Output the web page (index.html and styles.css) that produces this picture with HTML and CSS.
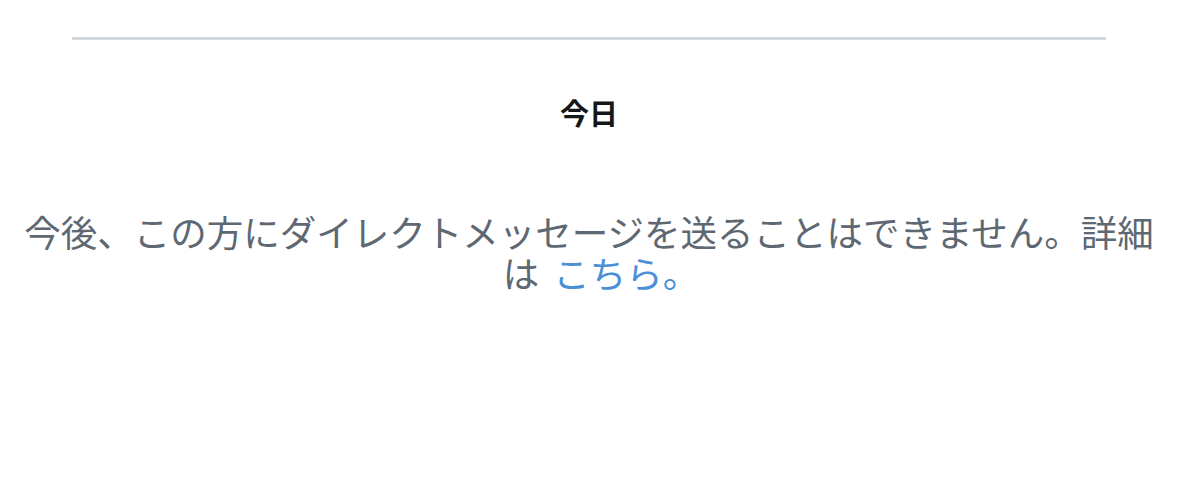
FILE: index.html
```html
<!DOCTYPE html>
<html lang="ja">
<head>
    <meta charset="UTF-8">
    <meta name="viewport" content="width=device-width, initial-scale=1.0">
    <title>メッセージ</title>
    <link rel="stylesheet" href="styles.css">
</head>
<body>

<div class="thread">
    <div class="divider"></div>
    <div class="day">今日</div>
    <p class="notice">今後、この方にダイレクトメッセージを送ることはできません。詳細<span class="tail">は</span> <a href="#" class="more-link">こちら。</a></p>
</div>

</body>
</html>
```

FILE: styles.css
```css
body, html {
    margin: 0;
    background: #fff;
    font-family: "Noto Sans CJK JP", "Noto Sans", sans-serif;
}
.thread {
    padding-top: 37px;
}
.divider {
    height: 3px;
    margin: 0 72px;
    background-color: #d2d9dc;
}
.day {
    margin-top: 58px;
    text-align: center;
    font-size: 29px;
    line-height: 29px;
    font-weight: bold;
    color: #14171a;
}
.notice {
    margin: 84px 0 0;
    padding: 0 8px;
    text-align: center;
    font-size: 36.5px;
    line-height: 41px;
    color: #5d6873;
}
.tail {
    display: inline-block;
    margin-left: 24px;
}
.more-link {
    display: inline-block;
    margin-left: 6px;
    color: #4b8fd5;
    text-decoration: none;
}
```
